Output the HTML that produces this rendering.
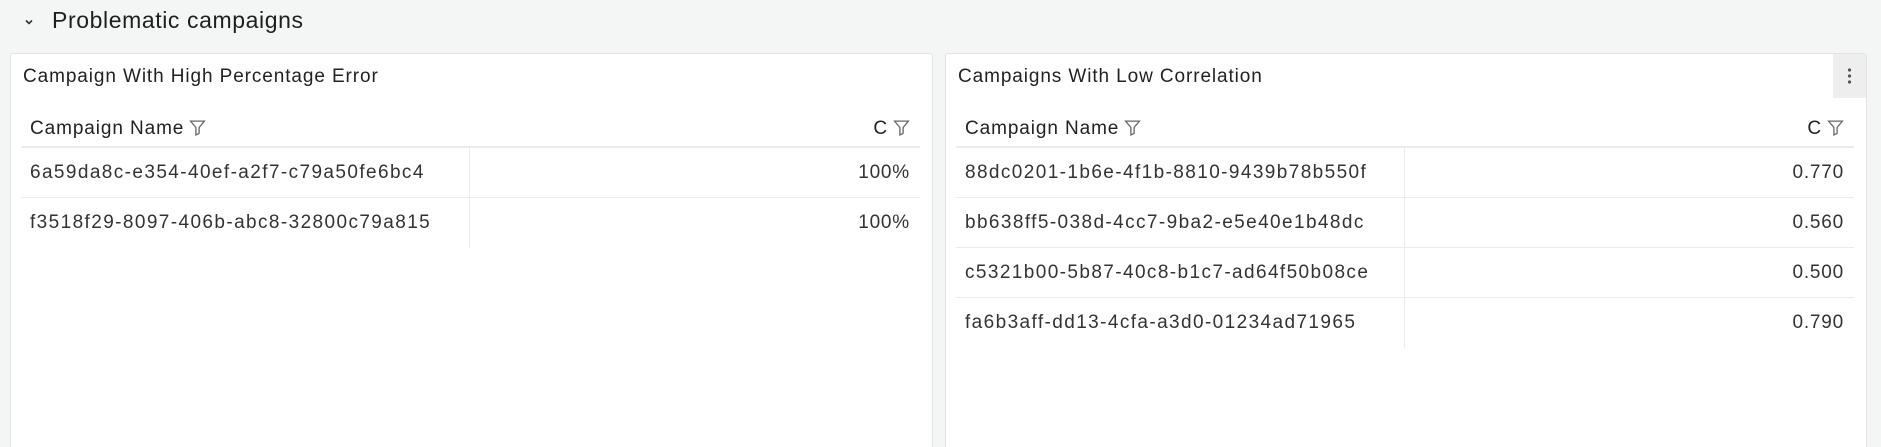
<!DOCTYPE html>
<html style="overflow:hidden;height:447px"><head><style>
*{box-sizing:border-box;margin:0;padding:0}
body{width:1881px;height:447px;background:#f4f5f5;font-family:"Liberation Sans",sans-serif;color:#222;position:relative;overflow:hidden}
.hdr{position:absolute;left:52px;top:7px;font-size:23px;color:#1f1f1f;letter-spacing:0.6px}
.chev{position:absolute;left:23px;top:16px}
.panel{position:absolute;top:53px;height:394px;background:#fff;border:1px solid #e2e3e3;border-bottom:none;border-radius:3px 3px 0 0}
.title{position:absolute;left:12px;font-size:19px;letter-spacing:0.9px}
.tbl{position:absolute;left:12px;right:12px;top:110px}
.th{height:37px;border-bottom:2px solid #ebebeb;position:relative;font-size:19px;letter-spacing:0.9px}
.th span{position:absolute;top:7px}
.row{height:50px;border-bottom:1px solid #ebebeb;position:relative;font-size:19px;color:#333;letter-spacing:1.4px}
.row .n{position:absolute;left:9px;top:14px}
.row .v{position:absolute;right:10px;top:14px;letter-spacing:0.8px}
.row .d{position:absolute;top:0;bottom:0;border-left:1px solid #ebebeb}
svg.f{vertical-align:-2px;margin-left:5px}
</style></head><body>
<svg class="chev" width="12" height="12" viewBox="0 0 12 12"><path d="M3 4.5l3 3 3-3" stroke="#333" stroke-width="1.6" fill="none"/></svg>
<div class="hdr">Problematic campaigns</div>

<div class="panel" style="left:10px;width:923px">
 <div class="title" style="top:12px">Campaign With High Percentage Error</div>
 <div class="tbl" style="top:57px;left:10px;right:12px">
  <div class="th"><span style="left:9px">Campaign Name<svg class="f" width="17" height="17" viewBox="0 0 16 16"><path d="M1.5 2h13l-5 6v5.5l-3 1.5V8z" stroke="#666" stroke-width="1.2" fill="none"/></svg></span><span style="right:10px">C<svg class="f" width="17" height="17" viewBox="0 0 16 16"><path d="M1.5 2h13l-5 6v5.5l-3 1.5V8z" stroke="#666" stroke-width="1.2" fill="none"/></svg></span></div>
  <div class="row"><span class="n">6a59da8c-e354-40ef-a2f7-c79a50fe6bc4</span><span class="d" style="left:448px"></span><span class="v">100%</span></div>
  <div class="row" style="border-bottom:none"><span class="n">f3518f29-8097-406b-abc8-32800c79a815</span><span class="d" style="left:448px"></span><span class="v">100%</span></div>
 </div>
</div>

<div class="panel" style="left:945px;width:922px">
 <div class="title" style="top:12px">Campaigns With Low Correlation</div>
 <div style="position:absolute;right:0;top:0;width:33px;height:44px;background:#eee"><svg width="33" height="44" viewBox="0 0 33 44"><circle cx="16.5" cy="16" r="1.6" fill="#555"/><circle cx="16.5" cy="22" r="1.6" fill="#555"/><circle cx="16.5" cy="28" r="1.6" fill="#555"/></svg></div>
 <div class="tbl" style="top:57px;left:10px;right:12px">
  <div class="th"><span style="left:9px">Campaign Name<svg class="f" width="17" height="17" viewBox="0 0 16 16"><path d="M1.5 2h13l-5 6v5.5l-3 1.5V8z" stroke="#666" stroke-width="1.2" fill="none"/></svg></span><span style="right:10px">C<svg class="f" width="17" height="17" viewBox="0 0 16 16"><path d="M1.5 2h13l-5 6v5.5l-3 1.5V8z" stroke="#666" stroke-width="1.2" fill="none"/></svg></span></div>
  <div class="row"><span class="n">88dc0201-1b6e-4f1b-8810-9439b78b550f</span><span class="d" style="left:448px"></span><span class="v">0.770</span></div>
  <div class="row"><span class="n">bb638ff5-038d-4cc7-9ba2-e5e40e1b48dc</span><span class="d" style="left:448px"></span><span class="v">0.560</span></div>
  <div class="row"><span class="n">c5321b00-5b87-40c8-b1c7-ad64f50b08ce</span><span class="d" style="left:448px"></span><span class="v">0.500</span></div>
  <div class="row" style="border-bottom:none"><span class="n">fa6b3aff-dd13-4cfa-a3d0-01234ad71965</span><span class="d" style="left:448px"></span><span class="v">0.790</span></div>
 </div>
</div>
</body></html>
